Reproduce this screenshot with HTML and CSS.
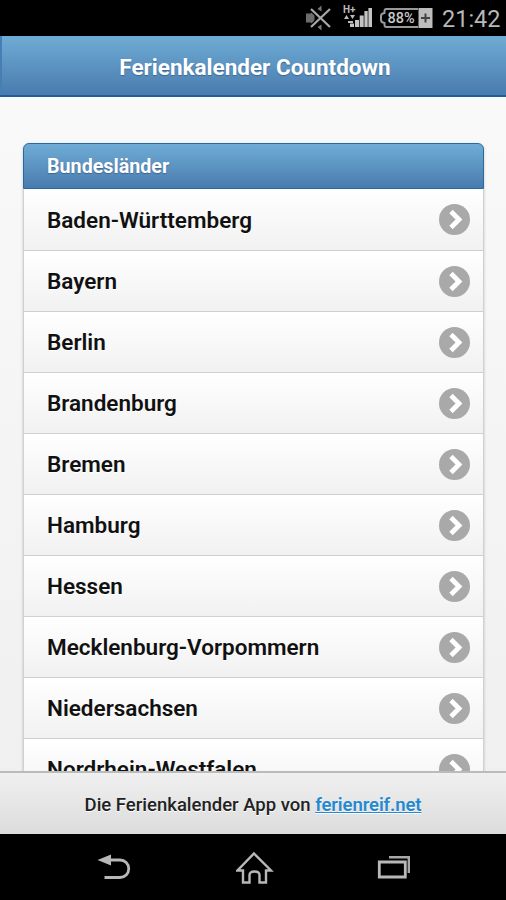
FILE: index.html
```html
<!DOCTYPE html>
<html lang="de">
<head>
  <meta charset="UTF-8" />
  <meta name="viewport" content="width=device-width, initial-scale=1.0" />
  <title>Ferienkalender Countdown</title>
  <link rel="stylesheet" href="styles.css">
</head>

<body>
  <div class="status-bar">
    <svg class="icon-mute" width="26" height="26" viewBox="0 0 26 26">
      <path d="M1 8.500h4.500l4-3.500v16l-4-3.500H1z" fill="#6c6c6c"/>
      <path d="M12.500 4l4-3.500v6zM12.500 22l4 3.500v-6z" fill="#777"/>
      <path d="M6 4l19 18M6 22L25 4" stroke="#000" stroke-width="4.500"/>
      <path d="M6 4l19 18M6 22L25 4" stroke="#a8a8a8" stroke-width="2.200"/>
    </svg>
    <svg class="icon-signal" width="30" height="24" viewBox="0 0 30 24">
      <text x="0" y="9" class="signal-label">H+</text>
      <path d="M1 15l2.500-4L6 15zM7 11h5l-2.500 4zM5 17h5v2H5z" fill="#bbb"/>
      <path d="M7 19.500h4V23H7zM12 16h4v7h-4zM16.700 11.500h4V23h-4zM21.400 7h3.300v16h-3.300zM25.400 4H29v19h-3.600z" fill="#c4c4c4"/>
    </svg>
    <svg class="icon-battery" width="55" height="22" viewBox="0 0 55 22">
      <path d="M39 2H7.500Q5.500 2 5.500 4v2Q2 6.500 2 9v4q0 2.500 3.500 3v2q0 2 2 2H39" fill="none" stroke="#999" stroke-width="2"/>
      <path d="M39.500 1h14v20h-14z" fill="#bdbdbd"/>
      <path d="M46.500 6.500v9M42 11h9" stroke="#444" stroke-width="2"/>
      <text x="8.500" y="16.300" class="battery-label" textLength="27" lengthAdjust="spacingAndGlyphs">88%</text>
    </svg>
    <span class="clock">21:42</span>
  </div>

  <div class="header">
    <h1>Ferienkalender Countdown</h1>
  </div>

  <div class="content">
    <ul class="listview">
      <li class="divider">Bundesländer</li>
      <li><a href="#">Baden-Württemberg</a><span class="arrow"><svg viewBox="0 0 31 31"><path d="M12 7.500l8 8-8 8"/></svg></span></li>
      <li><a href="#">Bayern</a><span class="arrow"><svg viewBox="0 0 31 31"><path d="M12 7.500l8 8-8 8"/></svg></span></li>
      <li><a href="#">Berlin</a><span class="arrow"><svg viewBox="0 0 31 31"><path d="M12 7.500l8 8-8 8"/></svg></span></li>
      <li><a href="#">Brandenburg</a><span class="arrow"><svg viewBox="0 0 31 31"><path d="M12 7.500l8 8-8 8"/></svg></span></li>
      <li><a href="#">Bremen</a><span class="arrow"><svg viewBox="0 0 31 31"><path d="M12 7.500l8 8-8 8"/></svg></span></li>
      <li><a href="#">Hamburg</a><span class="arrow"><svg viewBox="0 0 31 31"><path d="M12 7.500l8 8-8 8"/></svg></span></li>
      <li><a href="#">Hessen</a><span class="arrow"><svg viewBox="0 0 31 31"><path d="M12 7.500l8 8-8 8"/></svg></span></li>
      <li><a href="#">Mecklenburg-Vorpommern</a><span class="arrow"><svg viewBox="0 0 31 31"><path d="M12 7.500l8 8-8 8"/></svg></span></li>
      <li><a href="#">Niedersachsen</a><span class="arrow"><svg viewBox="0 0 31 31"><path d="M12 7.500l8 8-8 8"/></svg></span></li>
      <li><a href="#">Nordrhein-Westfalen</a><span class="arrow"><svg viewBox="0 0 31 31"><path d="M12 7.500l8 8-8 8"/></svg></span></li>
    </ul>
  </div>

  <div class="footer">
    <p>Die Ferienkalender App von <a href="#">ferienreif.net</a></p>
  </div>

  <div class="nav-bar">
    <svg width="36" height="30" viewBox="0 0 36 30">
      <path d="M11 7h13a8.700 8.700 0 0 1 0 17.500H8.500" fill="none" stroke="#b8b8b8" stroke-width="2.800"/>
      <path d="M1.500 7L15 1.500v11z" fill="#b8b8b8"/>
    </svg>
    <svg width="38" height="34" viewBox="0 0 38 34">
      <path d="M18 2.500L35 19.500h-5V31.500h-6.500V24q0-3.500-5-3.500T13.500 24v7.500H7v-12H1.500z" fill="none" stroke="#b8b8b8" stroke-width="2.400"/>
    </svg>
    <svg width="34" height="26" viewBox="0 0 34 26">
      <path d="M2.300 7h26v15h-26z" fill="none" stroke="#b8b8b8" stroke-width="2.800"/>
      <path d="M12 2.300h19.800V18" fill="none" stroke="#a8a8a8" stroke-width="2.400"/>
    </svg>
  </div>
</body>
</html>
```
FILE: styles.css
```css
* {
  box-sizing: border-box;
}

body {
  display: flex;
  flex-direction: column;
  height: 900px;
  margin: 0;
  overflow: hidden;
  font-family: Roboto, "Liberation Sans", sans-serif;
  background: #000;
}

.status-bar {
  display: flex;
  flex: none;
  justify-content: flex-end;
  height: 36px;
  padding-right: 7px;
}

.icon-mute {
  margin: 5px 12px 0 0;
}

.icon-signal {
  margin: 4px 6px 0 0;
}

.icon-battery {
  margin: 7px 8px 0 0;
}

.signal-label {
  font-size: 10px;
  font-weight: 700;
  fill: #bbb;
}

.battery-label {
  font-size: 14.500px;
  font-weight: 500;
  fill: #c8c8c8;
}

.clock {
  width: 57px;
  font-size: 23.500px;
  line-height: 38px;
  color: #b8b8b8;
  white-space: nowrap;
}

.header {
  flex: none;
  height: 61px;
  border: 1px solid #1f5f98;
  border-width: 0 0 2px;
  background: linear-gradient(#6facd5, #497bae);
  box-shadow: inset 2px 0 0 #457fb3;
}

.header h1 {
  margin: 0;
  padding-left: 4px;
  font-size: 22.500px;
  line-height: 62px;
  text-align: center;
  color: #fff;
  text-shadow: 0 1px 1px #3e6790;
}

.content {
  flex: 1;
  min-height: 0;
  padding: 46px 22px 0 23px;
  overflow: hidden;
  background: linear-gradient(#f9f9f9, #f0f0f0);
}

.listview {
  margin: 0;
  padding: 0;
  border-radius: 6px 6px 0 0;
  list-style: none;
  box-shadow: 0 1px 3px rgba(0,0,0,0.2);
}

.listview li {
  display: flex;
  align-items: center;
  justify-content: space-between;
  height: 61px;
  padding: 0 13px 0 23px;
  border: 1px solid #d0d0d0;
  border-top: 0;
  background: linear-gradient(#fff, #f1f1f1);
}

.listview a {
  font-size: 22.500px;
  font-weight: 600;
  color: #111;
  text-decoration: none;
  text-shadow: 0 1px 0 #fff;
}

.listview .divider {
  height: 46px;
  border: 1px solid #2a6b9f;
  border-radius: 6px 6px 0 0;
  background: linear-gradient(#6facd5, #497bae);
  font-size: 19.700px;
  font-weight: 700;
  color: #fff;
  text-shadow: 0 1px 1px #3e6790;
}

.listview .divider + li {
  height: 62px;
}

.arrow {
  width: 31px;
  height: 31px;
  border-radius: 50%;
  background: #a9a9a9;
}

.arrow svg {
  display: block;
}

.arrow path {
  fill: none;
  stroke: #fff;
  stroke-width: 4.800;
}

.footer {
  flex: none;
  height: 63px;
  border-top: 2px solid #bbb;
  background: linear-gradient(#f0f0f0, #dcdcdc);
}

.footer p {
  margin: 0;
  font-size: 18.500px;
  font-weight: 500;
  line-height: 64px;
  text-align: center;
  color: #222;
  text-shadow: 0 1px 0 #fff;
}

.footer a {
  font-weight: 600;
  letter-spacing: -0.1px;
  color: #2489ce;
}

.nav-bar {
  display: flex;
  flex: none;
  align-items: center;
  justify-content: space-between;
  height: 66px;
  padding: 1px 95px 0 96px;
}
```
